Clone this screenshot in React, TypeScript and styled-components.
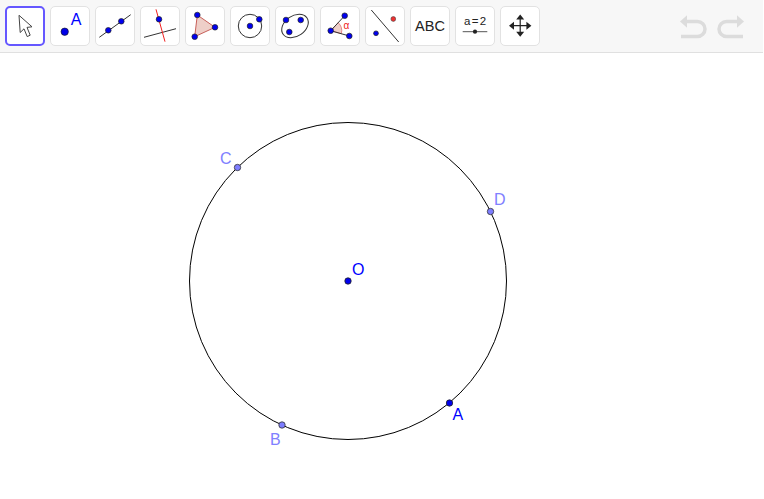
import React from "react";
import styled, { createGlobalStyle } from "styled-components";

const GlobalStyle = createGlobalStyle`
  html, body {
    margin: 0;
    padding: 0;
    background: #fff;
    font-family: "Liberation Sans", Arial, sans-serif;
  }
`;

const Applet = styled.div`
  width: 764px;
  height: 499px;
  display: flex;
  flex-direction: column;
  overflow: hidden;
`;

const Toolbar = styled.div`
  box-sizing: border-box;
  width: 763px;
  height: 53px;
  flex: none;
  display: flex;
  align-items: flex-start;
  gap: 5px;
  padding: 6px 15px 0 5px;
  background: #f7f7f7;
  border-bottom: 1px solid #e0e0e0;
`;

const ToolButton = styled.div<{ $active?: boolean }>`
  box-sizing: border-box;
  width: 40px;
  height: 40px;
  flex: none;
  background: #fff;
  border-radius: 5px;
  border: ${(p) => (p.$active ? "2px solid #6557ff" : "1px solid #e2e2e2")};
  display: flex;
  align-items: center;
  justify-content: center;
`;

const ToolIcon = styled.svg`
  width: 40px;
  height: 40px;
  flex: none;
`;

const History = styled.div`
  margin-left: auto;
  display: flex;
  margin-top: 4px;
`;

const HistoryIcon = styled.svg`
  width: 36px;
  height: 32px;
  display: block;
  fill: none;
  stroke: #dcdcdc;
  stroke-width: 3.5;
`;

const Canvas = styled.svg`
  flex: 1;
  width: 764px;
  display: block;
`;

const PointLabel = styled.text<{ $free?: boolean }>`
  font-family: "Liberation Sans", Arial, sans-serif;
  font-size: 16px;
  fill: ${(p) => (p.$free ? "#8080ff" : "#0000ff")};
`;

const Dot = ({ x, y, r = 2.8 }: { x: number; y: number; r?: number }) => (
  <circle cx={x} cy={y} r={r} fill="#0000f0" stroke="#222" strokeWidth={0.7} />
);

const Line = ({ d, color = "#333", w = 1 }: { d: string; color?: string; w?: number }) => (
  <path d={d} fill="none" stroke={color} strokeWidth={w} />
);

const icons: React.ReactNode[] = [
  // move
  <path
    key="move"
    d="M14 9.3 L15.2 26.5 L19 22.8 L22.2 30.6 L25.2 29.2 L22 21.4 L27 20.8 Z"
    fill="#fff"
    stroke="#444"
    strokeWidth={1}
    strokeLinejoin="round"
  />,
  // point
  <g key="point">
    <circle cx={14.7} cy={25.7} r={3.7} fill="#0000e8" stroke="#111" strokeWidth={0.6} />
    <text x={20.7} y={19.3} fontSize={16} fill="#0000ff" fontFamily="Liberation Sans">A</text>
  </g>,
  // line
  <g key="line">
    <Line d="M4.3 31.3 L35.7 8.7" />
    <Dot x={13.3} y={24.3} />
    <Dot x={26.3} y={15.3} />
  </g>,
  // perpendicular
  <g key="perp">
    <Line d="M4 31.3 L36 22.7" />
    <Line d="M16 3.3 L25 35.7" color="#f02020" />
    <Dot x={19} y={13.3} />
  </g>,
  // polygon
  <g key="polygon">
    <path d="M12.3 9 L30 21.3 L9.7 30.7 Z" fill="#eecfc8" stroke="#c8605a" strokeWidth={1} />
    <Dot x={12.3} y={9} />
    <Dot x={30} y={21.3} />
    <Dot x={9.7} y={30.7} />
  </g>,
  // circle
  <g key="circle">
    <circle cx={20} cy={20} r={11.7} fill="none" stroke="#333" strokeWidth={1} />
    <Dot x={20} y={20} />
    <Dot x={29.3} y={13.3} />
  </g>,
  // conic
  <g key="conic">
    <ellipse cx={20} cy={20} rx={14.5} ry={10.3} fill="none" stroke="#333" strokeWidth={1} transform="rotate(-35 20 20)" />
    <Dot x={11} y={14} />
    <Dot x={25.7} y={14} />
    <Dot x={14.3} y={26} />
  </g>,
  // angle
  <g key="angle">
    <path d="M10.7 24.7 L18.2 16.7 A11 11 0 0 1 21.3 27.7 Z" fill="#eecfc8" stroke="#e07070" strokeWidth={0.8} />
    <Line d="M10.7 24.7 L24.7 9.7" />
    <Line d="M10.7 24.7 L29.3 30" />
    <text x={23.4} y={23.2} fontSize={10} fill="#f02020" fontFamily="Liberation Sans">α</text>
    <Dot x={10.7} y={24.7} />
    <Dot x={24.7} y={9.7} />
    <Dot x={29.3} y={30} />
  </g>,
  // reflect
  <g key="reflect">
    <Line d="M6.3 4 L33.7 36" />
    <Dot x={11} y={27.3} r={2.4} />
    <circle cx={28.3} cy={13} r={2.4} fill="#f03030" stroke="#444" strokeWidth={0.6} />
  </g>,
  // text
  <text key="text" x={20} y={25} fontSize={14.5} textAnchor="middle" fill="#222" fontFamily="Liberation Sans">ABC</text>,
  // slider
  <g key="slider">
    <text x={20} y={18.7} fontSize={11.5} wordSpacing={-1.9} textAnchor="middle" fill="#222" fontFamily="Liberation Sans">a = 2</text>
    <Line d="M7.7 25.7 H32.3" color="#555" />
    <circle cx={20} cy={25.7} r={2.1} fill="#222" />
  </g>,
  // move view
  <g key="view">
    <Line d="M11 19.7 H29 M20.2 11 V29" color="#222" w={1.2} />
    <path
      d="M20.2 8.6 L24.2 13.6 H16.2 Z M20.2 30.8 L24.2 25.8 H16.2 Z M9 19.7 L14 15.7 V23.7 Z M31.4 19.7 L26.4 15.7 V23.7 Z"
      fill="#222"
    />
  </g>,
];

export default function App() {
  const free = [
    { x: 237.5, y: 167.5 },
    { x: 490.5, y: 211.5 },
    { x: 282, y: 425 },
  ];

  return (
    <Applet>
      <GlobalStyle />
      <Toolbar>
        {icons.map((icon, i) => (
          <ToolButton key={i} $active={i === 0}>
            <ToolIcon viewBox="0 0 40 40">{icon}</ToolIcon>
          </ToolButton>
        ))}
        <History>
          <HistoryIcon viewBox="0 0 36 32">
            <path d="M9 11.5 H21.5 a7.5 7.5 0 0 1 0 15 H5" />
            <path d="M4 11.5 L11 5.2 V17.8 Z" fill="#dcdcdc" stroke="none" />
          </HistoryIcon>
          <HistoryIcon viewBox="0 0 36 32">
            <path d="M27 11.5 H14.5 a7.5 7.5 0 0 0 0 15 H31" />
            <path d="M32 11.5 L25 5.2 V17.8 Z" fill="#dcdcdc" stroke="none" />
          </HistoryIcon>
        </History>
      </Toolbar>
      <Canvas viewBox="0 53 764 446">
        <circle cx={348} cy={281} r={158.5} fill="none" stroke="#000" strokeWidth={1} />
        {free.map((p) => (
          <circle key={p.x} cx={p.x} cy={p.y} r={3.2} fill="#7d7dff" stroke="#333" strokeWidth={0.8} />
        ))}
        <circle cx={449.5} cy={403} r={3.2} fill="#0000ee" stroke="#222" strokeWidth={0.8} />
        <circle cx={348} cy={281} r={3.2} fill="#0000ee" stroke="#222" strokeWidth={0.8} />
        <PointLabel x={352} y={275}>O</PointLabel>
        <PointLabel x={452.5} y={420}>A</PointLabel>
        <PointLabel $free x={270} y={445}>B</PointLabel>
        <PointLabel $free x={220} y={164}>C</PointLabel>
        <PointLabel $free x={494} y={205}>D</PointLabel>
      </Canvas>
    </Applet>
  );
}
